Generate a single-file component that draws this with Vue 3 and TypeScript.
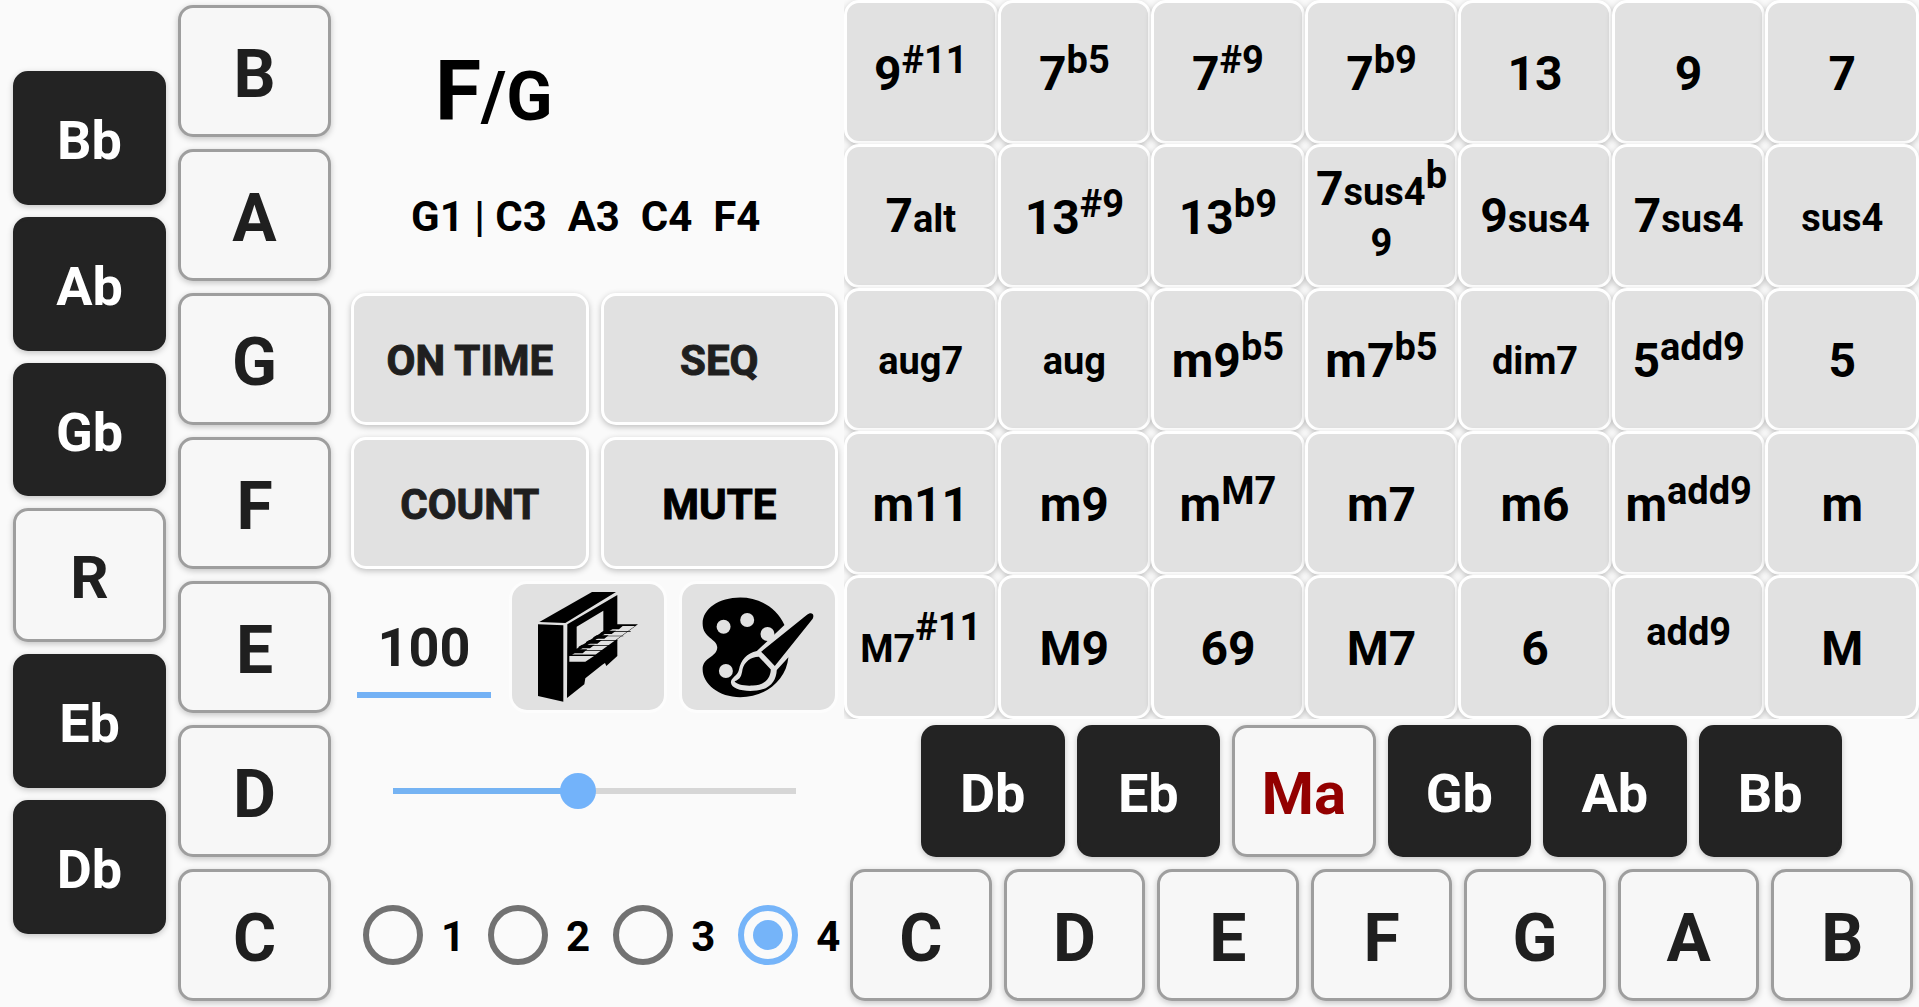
<script setup lang="ts">
import { ref } from 'vue'

type Size = 'big' | 'small' | 'sup'
interface Part {
  text: string
  size: Size
}
interface Chord {
  parts: Part[]
  kind?: 'compact' | 'tall'
}
interface Key {
  label: string
  tone: 'dark' | 'light' | 'root' | 'mode'
}

const big = (text: string): Part => ({ text, size: 'big' })
const small = (text: string): Part => ({ text, size: 'small' })
const sup = (text: string): Part => ({ text, size: 'sup' })
const chord = (...parts: Part[]): Chord => ({ parts })
const compact = (...parts: Part[]): Chord => ({ parts, kind: 'compact' })

const chords: Chord[] = [
  chord(big('9'), sup('#11')),
  chord(big('7'), sup('b5')),
  chord(big('7'), sup('#9')),
  chord(big('7'), sup('b9')),
  chord(big('13')),
  chord(big('9')),
  chord(big('7')),

  chord(big('7'), small('alt')),
  chord(big('13'), sup('#9')),
  chord(big('13'), sup('b9')),
  { parts: [big('7'), small('sus4'), sup('b'), small('\n9')], kind: 'tall' },
  chord(big('9'), small('sus4')),
  chord(big('7'), small('sus4')),
  compact(small('sus4')),

  compact(small('aug7')),
  compact(small('aug')),
  chord(big('m9'), sup('b5')),
  chord(big('m7'), sup('b5')),
  compact(small('dim7')),
  chord(big('5'), sup('add9')),
  chord(big('5')),

  chord(big('m11')),
  chord(big('m9')),
  chord(big('m'), sup('M7')),
  chord(big('m7')),
  chord(big('m6')),
  chord(big('m'), sup('add9')),
  chord(big('m')),

  compact(small('M7'), sup('#11')),
  chord(big('M9')),
  chord(big('69')),
  chord(big('M7')),
  chord(big('6')),
  compact(sup('add9')),
  chord(big('M')),
]

const dark = (label: string): Key => ({ label, tone: 'dark' })
const light = (label: string): Key => ({ label, tone: 'light' })

const bassBlack: Key[] = [dark('Bb'), dark('Ab'), dark('Gb'), { label: 'R', tone: 'root' }, dark('Eb'), dark('Db')]
const bassWhite: Key[] = ['B', 'A', 'G', 'F', 'E', 'D', 'C'].map(light)
const chordBlack: Key[] = [dark('Db'), dark('Eb'), { label: 'Ma', tone: 'mode' }, dark('Gb'), dark('Ab'), dark('Bb')]
const chordWhite: Key[] = ['C', 'D', 'E', 'F', 'G', 'A', 'B'].map(light)

const tempo = ref('100')
const volume = ref(46)
const octave = ref('4')
</script>

<template>
  <main class="pad">
    <section class="bass" aria-label="Bass keys">
      <div class="bass-black">
        <button v-for="k in bassBlack" :key="k.label" type="button" class="key" :class="k.tone">{{ k.label }}</button>
      </div>
      <div class="bass-white">
        <button v-for="k in bassWhite" :key="k.label" type="button" class="key" :class="k.tone">{{ k.label }}</button>
      </div>
    </section>

    <section class="controls" aria-label="Controls">
      <h1 class="name">F<span class="slash">/G</span></h1>
      <p class="notes">G1 | C3&nbsp; A3&nbsp; C4&nbsp; F4</p>
      <div class="pair">
        <button type="button" class="action">ON TIME</button>
        <button type="button" class="action">SEQ</button>
      </div>
      <div class="pair">
        <button type="button" class="action">COUNT</button>
        <button type="button" class="action strong">MUTE</button>
      </div>
      <div class="tools">
        <input v-model="tempo" class="tempo" type="text" inputmode="numeric" aria-label="Tempo" />
        <button type="button" class="tool" aria-label="Instrument">
          <svg viewBox="36 42 456 378" aria-hidden="true">
            <path d="M118 156 276 66H348L196 159Z" />
            <path d="M114 163 190 166V395L114 378Z" />
            <path
              fill-rule="evenodd"
              d="M202 163 352 75V163H414L352 208V258L319 288 315 279 307 284 256 325 253 343 201 384ZM230 170V236L310 184V122Z"
            />
            <path class="paper" d="M208 258H282L256 275H208Z" />
            <path class="paper" d="M234 243 352 168H405L286 254H216Z" />
            <path d="M208 254H290V257H208ZM236 240H312V242H236ZM256 225H332V227H256ZM276 211H352V213H276ZM300 197H370V199H300ZM322 183H392V185H322Z" />
            <path d="M214 244 224 238H262L248 250H214ZM236 230 246 224H284L270 235H236ZM258 216 268 210H306L292 221H258ZM280 202 290 196H326L313 206H280ZM302 188 312 182H348L335 192H302ZM324 174 334 168H368L357 178H324Z" />
          </svg>
        </button>
        <button type="button" class="tool" aria-label="Theme">
          <svg viewBox="37 42 460 378" aria-hidden="true">
            <path
              d="M212 82C270 82 322 113 345 165L262 243C232 249 214 270 208 300C204 318 184 322 184 338C186 358 222 366 262 362C306 356 320 330 322 300L357 262C350 332 288 382 212 382C148 382 99 342 99 298C99 262 143 262 143 232C143 206 99 204 99 160C99 116 148 82 212 82Z"
            />
            <circle class="paper" cx="162" cy="170" r="21" />
            <circle class="paper" cx="233" cy="150" r="21" />
            <circle class="paper" cx="294" cy="192" r="21" />
            <circle class="paper" cx="169" cy="303" r="21" />
            <path d="M275 245 412 135C424 125 437 130 430 146L316 288Z" />
            <path d="M268 260 304 299C303 328 283 346 250 347C224 349 200 343 195 334C214 328 216 316 219 298C224 276 244 260 268 260Z" />
          </svg>
        </button>
      </div>
      <div class="slide">
        <input v-model="volume" class="range" type="range" min="0" max="100" aria-label="Volume" :style="{ '--fill': volume + '%' }" />
      </div>
      <fieldset class="octaves" aria-label="Octave">
        <label v-for="n in ['1', '2', '3', '4']" :key="n" class="octave">
          <input v-model="octave" type="radio" name="octave" :value="n" />
          <span>{{ n }}</span>
        </label>
      </fieldset>
    </section>

    <section class="play" aria-label="Chord keys">
      <div class="chords">
        <button v-for="(c, i) in chords" :key="i" type="button" class="chord" :class="c.kind"><span class="label"><span v-for="(p, j) in c.parts" :key="j" :class="p.size">{{ p.text }}</span></span></button>
      </div>
      <div class="row black-row">
        <button v-for="k in chordBlack" :key="k.label" type="button" class="key" :class="k.tone">{{ k.label }}</button>
      </div>
      <div class="row white-row">
        <button v-for="k in chordWhite" :key="k.label" type="button" class="key" :class="k.tone">{{ k.label }}</button>
      </div>
    </section>
  </main>
</template>

<style>
body {
  margin: 0;
  background: #fafafa;
}
</style>

<style scoped>
.pad {
  display: grid;
  grid-template-columns: minmax(0, 331fr) minmax(0, 513fr) minmax(0, 1075fr);
  min-height: 100vh;
  overflow: hidden;
  background: #fafafa;
  color: #000;
  font-family: Roboto, sans-serif;
  font-weight: 700;
}
.pad * {
  box-sizing: border-box;
}
button,
input {
  min-width: 0;
  margin: 0;
  font-family: inherit;
  font-weight: inherit;
}

.bass {
  display: grid;
  grid-template-columns: 1fr 1fr;
  gap: 12px;
  padding-left: 13px;
}
.bass-black,
.bass-white {
  display: grid;
  grid-auto-rows: 1fr;
  gap: 12px;
}
.bass-black {
  padding: 71px 0 73px;
}
.bass-white {
  padding: 5px 0 6px;
}

.key {
  padding: 8px 0 0;
  border: 3px solid #9e9e9e;
  border-radius: 15px;
  background: #f7f7f7;
  box-shadow: 0 2px 6px rgba(0, 0, 0, 0.22);
  color: #1f1f1f;
  font-size: 66px;
  line-height: 72px;
}
.key.dark {
  padding-top: 6px;
  border-color: #232323;
  background: #232323;
  color: #fff;
  font-size: 54px;
}
.key.root,
.key.mode {
  padding-top: 6px;
  font-size: 60px;
}
.key.mode {
  color: #930000;
}

.controls {
  display: grid;
  grid-template-rows: repeat(7, minmax(0, 1fr));
  gap: 12px;
  padding: 5px 6px 6px 20px;
}
.name {
  align-self: end;
  margin: 0;
  padding-left: 84px;
  font-size: 84px;
  line-height: 80px;
}
.slash {
  font-size: 68px;
}
.notes {
  align-self: center;
  margin: 0;
  padding: 4px 0 0 60px;
  font-size: 42px;
  line-height: 48px;
  white-space: nowrap;
}
.pair {
  display: grid;
  grid-template-columns: 1fr 1fr;
  gap: 12px;
}
.action {
  padding: 4px 0 0;
  border: 3px solid #fff;
  border-radius: 15px;
  background: #e1e1e1;
  box-shadow: 0 2px 6px rgba(0, 0, 0, 0.24);
  color: #1f1f1f;
  font-size: 42px;
  line-height: 48px;
  -webkit-text-stroke: 1px currentColor;
}
.action.strong {
  color: #000;
}
.tools {
  display: grid;
  grid-template-columns: 146fr 158fr 159fr;
  gap: 12px;
}
.tempo {
  align-self: center;
  margin: 0 6px;
  padding: 16px 0 8px;
  border: 0;
  border-bottom: 6px solid #73b1f5;
  background: none;
  color: #1f1f1f;
  font-size: 54px;
  line-height: 72px;
  text-align: center;
}
.tool {
  display: flex;
  padding: 0;
  border: 3px solid #fdfdfd;
  border-radius: 18px;
  background: #e1e1e1;
}
.tool svg {
  width: 100%;
  height: 100%;
}
.paper {
  fill: #e1e1e1;
}

.slide {
  display: flex;
  align-items: center;
  padding: 0 24px;
}
.range {
  width: 100%;
  height: 36px;
  appearance: none;
  background: linear-gradient(to right, #75b3f3 var(--fill), #d6d6d6 var(--fill)) center / calc(100% - 36px) 6px no-repeat;
}
.range::-webkit-slider-thumb {
  width: 36px;
  height: 36px;
  appearance: none;
  border: 0;
  border-radius: 50%;
  background: #73b3fa;
}
.octaves {
  display: flex;
  align-items: center;
  gap: 23px;
  min-width: 0;
  margin: 0;
  padding: 0 0 0 12px;
  border: 0;
}
.octave {
  display: flex;
  align-items: center;
  gap: 18px;
  font-size: 42px;
  line-height: 48px;
}
.octave span {
  padding-top: 4px;
}
.octave input {
  display: grid;
  place-items: center;
  flex: none;
  width: 60px;
  height: 60px;
  appearance: none;
  border: 6px solid #727272;
  border-radius: 50%;
}
.octave input:checked {
  border-color: #75b4f9;
}
.octave input:checked::before {
  width: 30px;
  height: 30px;
  border-radius: 50%;
  background: #75b4f9;
  content: '';
}

.play {
  display: grid;
  grid-template-rows: minmax(0, 719fr) minmax(0, 144fr) minmax(0, 144fr);
}
.chords {
  display: grid;
  grid-template-columns: repeat(7, minmax(0, 1fr));
  grid-template-rows: repeat(5, minmax(0, 1fr));
  overflow: hidden;
}
.chord {
  padding: 4px 0 0;
  border: 3px solid #fff;
  border-radius: 15px;
  background: #e1e1e1;
  box-shadow: 0 2px 6px rgba(0, 0, 0, 0.24);
  color: #000;
  font-size: 48px;
  line-height: 48px;
}
.label {
  white-space: pre-line;
}
.small,
.sup {
  font-size: 38px;
}
.sup {
  line-height: 0;
  vertical-align: 17px;
}
.chord.compact {
  font-size: 38px;
}
.chord.compact .small + .sup {
  vertical-align: 22px;
}
.chord.tall {
  padding: 0;
}
.row {
  display: grid;
  grid-auto-flow: column;
  grid-auto-columns: minmax(0, 1fr);
  gap: 12px;
}
.black-row {
  padding: 6px 77px;
}
.white-row {
  padding: 6px;
}
</style>
